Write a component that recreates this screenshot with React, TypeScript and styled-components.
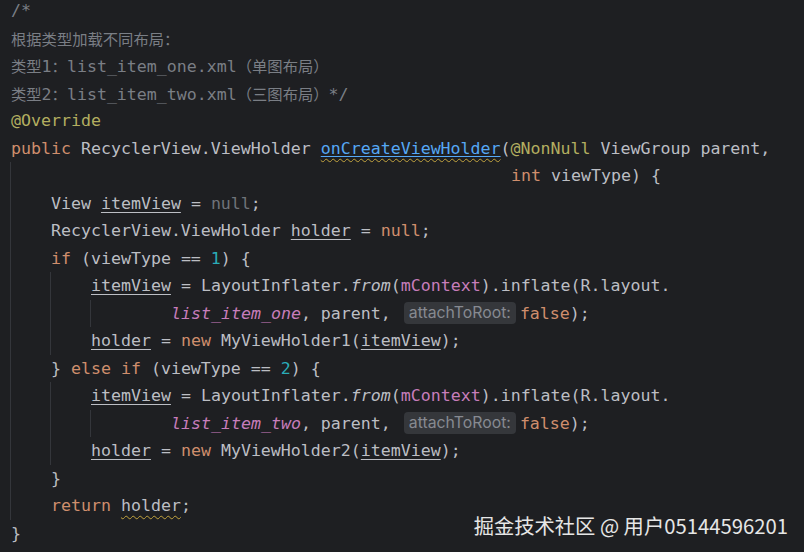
import React from "react";
import styled, { createGlobalStyle } from "styled-components";

const Global = createGlobalStyle`
  html, body { margin: 0; padding: 0; background: #1e1f22; }
`;

const Editor = styled.div`
  position: relative;
  width: 804px;
  height: 552px;
  overflow: hidden;
  background: #1e1f22;
`;

const Code = styled.div`
  margin-top: -3px;
  padding-left: 11px;
  font-family: "DejaVu Sans Mono", "Liberation Mono", "Noto Sans CJK SC", monospace;
  font-size: 16.6px;
  color: #bcbec4;
`;

const Line = styled.div<{ $indent?: number }>`
  height: 27.5px;
  line-height: 27.5px;
  white-space: pre;
  padding-left: ${(p) => (p.$indent ?? 0) * 10}px;
`;

const Block = styled.div<{ $col: number }>`
  margin-left: ${(p) => p.$col * 10 - 1}px;
  border-left: 1px solid #34363b;
`;

const Cmt = styled.span`
  color: #7a7e85;
`;
const Cjk = styled.span`
  font-family: "Noto Sans CJK SC", sans-serif;
  font-size: 15.3px;
`;
const Kw = styled.span`
  color: #cf8e6d;
`;
const Ann = styled.span`
  color: #b3ae60;
`;
const Num = styled.span`
  color: #2aacb8;
`;
const Field = styled.span<{ $italic?: boolean }>`
  color: #c77dbb;
  font-style: ${(p) => (p.$italic ? "italic" : "normal")};
`;
const Ital = styled.span`
  font-style: italic;
`;
const Dim = styled.span`
  color: #6f737a;
`;
const Var = styled.span`
  text-decoration: underline solid #bcbec4;
  text-decoration-thickness: 1px;
  text-underline-offset: 3px;
`;
const Warn = styled.span`
  text-decoration: underline wavy #c2a33e;
  text-decoration-thickness: 1px;
  text-underline-offset: 4px;
`;
const Decl = styled.span`
  color: #56a8f5;
  text-decoration: underline solid #56a8f5;
  text-decoration-thickness: 1px;
  text-underline-offset: 2px;
`;
const Hint = styled.span`
  display: inline-block;
  height: 22px;
  line-height: 22px;
  margin: 0 4px 0 3px;
  padding: 0 5px;
  border-radius: 4px;
  background: #35373b;
  color: #878a91;
  font-family: Inter, "Noto Sans", sans-serif;
  font-size: 15.8px;
  vertical-align: middle;
  position: relative;
  top: -1px;
`;

const Watermark = styled.div`
  position: absolute;
  right: 16px;
  bottom: 17px;
  font-family: "Noto Sans CJK SC", "Noto Sans", sans-serif;
  font-size: 20.3px;
  line-height: 1;
  color: #e6e6e6;
  white-space: pre;
`;

function InflateBlock({ layout, n }: { layout: string; n: number }) {
  return (
    <Block $col={4}>
      <Line $indent={4}>
        <Var>itemView</Var> = LayoutInflater.<Ital>from</Ital>(<Field>mContext</Field>).inflate(R.layout.
      </Line>
      <Block $col={4}>
        <Line $indent={8}>
          <Field $italic>{layout}</Field>, parent, <Hint>attachToRoot:</Hint>
          <Kw>false</Kw>);
        </Line>
      </Block>
      <Line $indent={4}>
        <Var>holder</Var> = <Kw>new</Kw> MyViewHolder{n}(<Var>itemView</Var>);
      </Line>
    </Block>
  );
}

export default function App() {
  return (
    <Editor>
      <Global />
      <Code>
        <Line>
          <Cmt>/*</Cmt>
        </Line>
        <Line>
          <Cmt>
            <Cjk>根据类型加载不同布局：</Cjk>
          </Cmt>
        </Line>
        <Line>
          <Cmt>
            <Cjk>类型</Cjk>1<Cjk>：</Cjk>list_item_one.xml<Cjk>（单图布局）</Cjk>
          </Cmt>
        </Line>
        <Line>
          <Cmt>
            <Cjk>类型</Cjk>2<Cjk>：</Cjk>list_item_two.xml<Cjk>（三图布局）</Cjk>*/
          </Cmt>
        </Line>
        <Line>
          <Ann>@Override</Ann>
        </Line>
        <Line>
          <Kw>public</Kw> RecyclerView.ViewHolder{" "}
          <Warn>
            <Decl>onCreateViewHolder</Decl>
          </Warn>
          (<Ann>@NonNull</Ann> ViewGroup parent,
        </Line>
        <Block $col={0}>
          <Line $indent={50}>
            <Kw>int</Kw> viewType) {"{"}
          </Line>
          <Line $indent={4}>
            View <Var>itemView</Var> = <Dim>null</Dim>;
          </Line>
          <Line $indent={4}>
            RecyclerView.ViewHolder <Var>holder</Var> = <Kw>null</Kw>;
          </Line>
          <Line $indent={4}>
            <Kw>if</Kw> (viewType == <Num>1</Num>) {"{"}
          </Line>
          <InflateBlock layout="list_item_one" n={1} />
          <Line $indent={4}>
            {"} "}
            <Kw>else if</Kw> (viewType == <Num>2</Num>) {"{"}
          </Line>
          <InflateBlock layout="list_item_two" n={2} />
          <Line $indent={4}>{"}"}</Line>
          <Line $indent={4}>
            <Kw>return</Kw> <Warn>holder</Warn>;
          </Line>
        </Block>
        <Line>{"}"}</Line>
      </Code>
      <Watermark>掘金技术社区 @ 用户05144596201</Watermark>
    </Editor>
  );
}
